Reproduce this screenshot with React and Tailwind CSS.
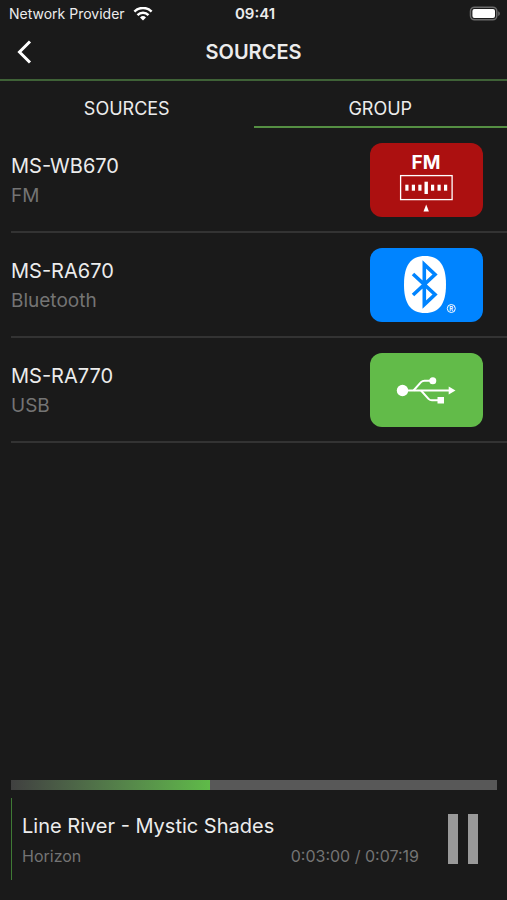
import React, { useState } from "react";

const FmIcon = () => (
  <svg className="h-full w-full" viewBox="0 0 113 74" aria-hidden="true">
    <text x="56" y="25.500" textAnchor="middle" fill="#fff" fontSize="19" fontWeight="700">
      FM
    </text>
    <rect x="30.600" y="32.600" width="51.500" height="24" fill="none" stroke="#fff" strokeWidth="1.300" />
    <g fill="#fff">
      <rect x="35.300" y="41.700" width="3.200" height="6" />
      <rect x="41.800" y="41.700" width="3.200" height="6" />
      <rect x="48.300" y="41.700" width="3.200" height="6" />
      <rect x="54.500" y="38.700" width="3.400" height="12.300" />
      <rect x="61" y="41.700" width="3.200" height="6" />
      <rect x="67.500" y="41.700" width="3.200" height="6" />
      <rect x="74" y="41.700" width="3.200" height="6" />
      <path d="M56.200 61.500l2.700 7h-5.400z" />
    </g>
  </svg>
);

const BluetoothIcon = () => (
  <svg className="h-full w-full" viewBox="0 0 113 74" aria-hidden="true">
    <path
      d="M55 8C69.500 8 76 17.500 76 36.500S69.500 65 55 65 34 55.500 34 36.500 40.500 8 55 8z"
      fill="#fff"
    />
    <path
      d="M43 47L65 26.500 54.300 16.500V56.500L65 46.500 43 26"
      fill="none"
      stroke="#0084ff"
      strokeWidth="3.600"
    />
    <circle cx="81.300" cy="60.500" r="4" fill="none" stroke="#fff" strokeWidth="1" />
    <text x="81.300" y="62.700" textAnchor="middle" fill="#fff" fontSize="6" fontWeight="600">
      R
    </text>
  </svg>
);

const UsbIcon = () => (
  <svg className="h-full w-full" viewBox="0 0 113 74" aria-hidden="true">
    <g fill="#fff">
      <circle cx="32.500" cy="37.500" r="5.700" />
      <circle cx="62.800" cy="27.700" r="3.500" />
      <rect x="67.500" y="44" width="6.500" height="6.500" />
      <path d="M78.700 33.500l6.800 4-6.800 4z" />
    </g>
    <g fill="none" stroke="#fff" strokeWidth="2">
      <path d="M34 37.500H80" />
      <path d="M43.500 37.500l7.500-8.300q1.400-1.500 3.500-1.500h7" />
      <path d="M51 37.500l7.500 8.300q1.400 1.500 3.500 1.500h6.500" />
    </g>
  </svg>
);

const devices = [
  { name: "MS-WB670", source: "FM", color: "bg-[#ac1010]", Icon: FmIcon },
  { name: "MS-RA670", source: "Bluetooth", color: "bg-[#0084ff]", Icon: BluetoothIcon },
  { name: "MS-RA770", source: "USB", color: "bg-[#62bb49]", Icon: UsbIcon },
];

const tabs = ["SOURCES", "GROUP"];

const App = () => {
  const [activeTab, setActiveTab] = useState("GROUP");
  const elapsed = 180;
  const duration = 439;

  return (
    <div className="flex min-h-screen flex-col bg-[#1a1a1a] font-['Inter',sans-serif] text-[#ececec]">
      {/* Status bar */}
      <div className="grid h-7 grid-cols-3 items-center pr-1.5 pl-[9px] text-sm">
        <div className="flex items-center gap-2 whitespace-nowrap">
          <span>Network Provider</span>
          <svg className="h-3.5 w-5" viewBox="0 0 20 14" aria-label="Wi-Fi">
            <g fill="none" stroke="#fff" strokeWidth="2.500">
              <path d="M1.400 4.600a12 12 0 0 1 17.200 0" />
              <path d="M4.500 8.100a7.800 7.800 0 0 1 11 0" />
            </g>
            <path d="M10 13.600l-3-3.200a4.300 4.300 0 0 1 6 0z" fill="#fff" />
          </svg>
        </div>
        <span className="text-center text-[15px] font-semibold">09:41</span>
        <svg className="h-4 w-8 justify-self-end" viewBox="0 0 32 16" aria-label="Battery">
          <rect x="1.500" y="1.200" width="26.300" height="12.600" rx="4" fill="#1a1a1a" stroke="#6b6b6b" strokeWidth="1.500" />
          <rect x="3.400" y="3" width="22.600" height="9" rx="2" fill="#fff" />
          <path d="M29.200 5.200c2.200 1 2.200 3.800 0 4.800z" fill="#6b6b6b" />
        </svg>
      </div>

      {/* Header */}
      <header className="grid h-[53px] grid-cols-[48px_1fr_48px] items-center border-b-2 border-[#3f6237] pb-1">
        <button className="flex h-12 items-center justify-center" aria-label="Back">
          <svg className="h-6 w-4" viewBox="0 0 16 24" fill="none">
            <path d="M14 1.500L3.500 12 14 22.500" stroke="#fff" strokeWidth="3" />
          </svg>
        </button>
        <h1 className="text-center text-xl font-semibold">SOURCES</h1>
      </header>

      {/* Tabs */}
      <div className="grid h-[47px] grid-cols-2" role="tablist">
        {tabs.map((tab) => (
          <button
            key={tab}
            role="tab"
            aria-selected={activeTab === tab}
            className={`border-b-2 pt-2.5 text-lg ${activeTab === tab ? "border-[#558f43]" : "border-transparent"}`}
            onClick={() => setActiveTab(tab)}
          >
            {tab}
          </button>
        ))}
      </div>

      {/* Devices */}
      <ul className="flex-1 pl-[11px]">
        {devices.map(({ name, source, color, Icon }) => (
          <li key={name} className="border-b-2 border-[#333333]">
            <button className="flex w-full items-center justify-between pt-[15px] pb-3.5 pr-6 text-left">
              <span className="flex flex-col pt-1">
                <span className="text-xl leading-7">{name}</span>
                <span className="text-[19px] leading-8 text-[#747474]">{source}</span>
              </span>
              <span className={`h-[74px] w-[113px] overflow-hidden rounded-xl ${color}`}>
                <Icon />
              </span>
            </button>
          </li>
        ))}
      </ul>

      {/* Now playing */}
      <footer className="pr-2.5 pb-5 pl-[11px]">
        <div
          className="h-2.5 bg-[#585858]"
          role="progressbar"
          aria-label="Track position"
          aria-valuemin={0}
          aria-valuemax={duration}
          aria-valuenow={elapsed}
        >
          <div
            className="h-full bg-linear-to-r from-[#404040] to-[#5fbb48]"
            style={{ width: `${(elapsed / duration) * 100}%` }}
          />
        </div>
        <div className="mt-2 flex h-[82px] items-center justify-between border-l border-l-[#3f7a35] pr-[19px] pl-2.5">
          <div className="w-[397px] pt-0.5">
            <p className="text-xl leading-7">Line River - Mystic Shades</p>
            <div className="mt-1 flex justify-between text-base text-[#747474]">
              <span>Horizon</span>
              <span>0:03:00 / 0:07:19</span>
            </div>
          </div>
          <button className="flex gap-2.5" aria-label="Pause">
            <span className="h-[50px] w-2.5 bg-[#999999]" />
            <span className="h-[50px] w-2.5 bg-[#999999]" />
          </button>
        </div>
      </footer>
    </div>
  );
};

export default App;
